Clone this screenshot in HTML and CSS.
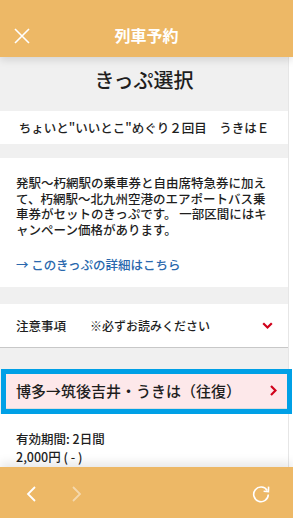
FILE: index.html
```html
<!DOCTYPE html>
<html lang="ja">
<head>
<meta charset="utf-8">
<title>列車予約</title>
<link rel="stylesheet" href="styles.css">
</head>
<body>
<div class="app">
  <header class="header">
    <svg class="close" width="16" height="16" viewBox="0 0 16 16"><path d="M1 1 L15 15 M15 1 L1 15" stroke="#fff" stroke-width="1.6" fill="none"/></svg>
    <h1 class="header-title">列車予約</h1>
  </header>
  <main class="content">
    <div class="page-title">きっぷ選択</div>
    <div class="subtitle">ちょいと"いいとこ"めぐり２回目　うきはＥ</div>
    <section class="desc">
      <p class="desc-text">発駅〜朽網駅の乗車券と自由席特急券に加えて、朽網駅〜北九州空港のエアポートバス乗車券がセットのきっぷです。 一部区間にはキャンペーン価格があります。</p>
      <p class="desc-link">→ このきっぷの詳細はこちら</p>
    </section>
    <section class="notice">
      <span class="notice-label">注意事項</span>
      <span class="notice-note">※必ずお読みください</span>
      <svg class="chev-down" width="11" height="8" viewBox="0 0 11 8"><path d="M1.2 1.2 L5.5 5.5 L9.8 1.2" stroke="#d0021b" stroke-width="2.2" fill="none"/></svg>
    </section>
    <section class="route-box">
      <div class="route">
        <span class="route-text">博多→筑後吉井・うきは（往復）</span>
        <svg class="chev-right" width="7" height="11" viewBox="0 0 7 11"><path d="M1 1 L5.5 5.5 L1 10" stroke="#d0021b" stroke-width="2.2" fill="none"/></svg>
      </div>
    </section>
    <section class="info">
      <div>有効期間: 2日間</div>
      <div>2,000円 ( - )</div>
    </section>
    <div class="scrollbar"></div>
  </main>
  <footer class="footer">
    <svg class="nav-icon" width="12" height="16" viewBox="0 0 12 16"><path d="M9 1 L2 8 L9 15" stroke="#fff" stroke-width="1.8" fill="none"/></svg>
    <svg class="nav-icon dim" width="12" height="16" viewBox="0 0 12 16"><path d="M3 1 L10 8 L3 15" stroke="#fff" stroke-width="1.8" fill="none"/></svg>
    <span class="spacer"></span>
    <svg class="reload" width="20" height="20" viewBox="0 0 20 20"><path d="M16.2 6.5 A7.3 7.3 0 1 0 17.3 10.5" stroke="#fff" stroke-width="1.6" fill="none"/><path d="M17.6 2.6 L17.4 7.6 L12.6 7.2" stroke="#fff" stroke-width="1.6" fill="none"/></svg>
  </footer>
</div>
</body>
</html>
```
FILE: styles.css
```css
* { box-sizing: border-box; margin: 0; padding: 0; }
html, body { width: 293px; height: 518px; overflow: hidden; }
body {
  font-family: "Noto Sans CJK JP", "Noto Sans", sans-serif;
  color: #1e1e1e;
  background: #f0f0f0;
}
.app {
  display: flex;
  flex-direction: column;
  height: 518px;
}
.header {
  position: relative;
  z-index: 3;
  height: 57px;
  flex: 0 0 57px;
  background: #edb866;
  display: flex;
  align-items: center;
  justify-content: center;
  padding-top: 12px;
  box-shadow: 0 3px 8px rgba(0,0,0,0.12);
}
.close {
  position: absolute;
  left: 14px;
  top: 28px;
}
.header-title {
  font-size: 16px;
  font-weight: 700;
  color: #fff;
  line-height: 22px;
}
.content {
  position: relative;
  flex: 1;
  overflow: hidden;
  background: #f0f0f0;
  padding-right: 5px;
}
.page-title {
  font-size: 20px;
  font-weight: 500;
  line-height: 28px;
  text-align: center;
  padding: 9px 0 17px;
}
.subtitle {
  background: #fff;
  height: 33px;
  display: flex;
  align-items: center;
  justify-content: center;
  font-size: 12.5px;
  font-weight: 500;
  margin-bottom: 14px;
}
.desc {
  background: #fff;
  padding: 17px 14px 14px 16px;
  font-size: 12.5px;
  font-weight: 500;
  line-height: 15.6px;
  margin-bottom: 17px;
}
.desc-link {
  margin-top: 20px;
  color: #2a68ad;
}
.notice {
  background: #fff;
  height: 44px;
  border-bottom: 1px solid #c8c8c8;
  display: flex;
  align-items: center;
  padding: 0 15px 0 16px;
  font-size: 12px;
  font-weight: 500;
  margin-bottom: 21px;
}
.notice-label {
  font-size: 12.5px;
  width: 74px;
}
.notice-note { flex: 1; }
.chev-down { margin-top: 1px; }
.route-box {
  position: relative;
  z-index: 2;
  margin: 0 -4px 0 1px;
  border: 5px solid #00a0e6;
  background: #fff;
}
.route {
  height: 35px;
  background: #fde8ea;
  border-bottom: 1px solid #ddd;
  display: flex;
  align-items: center;
  padding: 0 10px 0 10px;
}
.route-text {
  flex: 1;
  font-size: 15px;
  font-weight: 500;
}
.info {
  background: #fff;
  padding: 16px 16px 10px;
  font-size: 12.5px;
  font-weight: 500;
  line-height: 18px;
  height: 62px;
}
.scrollbar {
  position: absolute;
  top: 0;
  right: 0;
  bottom: 0;
  width: 5px;
  background: #fff;
  border-left: 1px solid #e6e6e6;
  z-index: 1;
}
.footer {
  position: relative;
  z-index: 3;
  flex: 0 0 51px;
  height: 51px;
  background: #edb866;
  display: flex;
  align-items: center;
  padding: 0 22px 0 26px;
  box-shadow: 0 -4px 10px rgba(0,0,0,0.10);
}
.nav-icon { margin-right: 32px; margin-top: 2px; }
.dim { opacity: 0.45; }
.spacer { flex: 1; }
.reload { margin-top: 3px; }
```
